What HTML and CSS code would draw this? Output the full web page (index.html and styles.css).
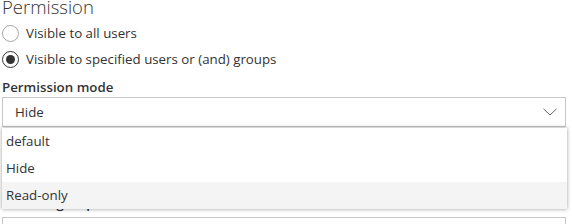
FILE: index.html
```html
<!DOCTYPE html>
<html lang="en">
<head>
    <meta charset="UTF-8" />
    <title>Permission</title>
    <link rel="stylesheet" href="styles.css">
</head>
<body>
    <div class="panel">
        <h2 class="title">Permission</h2>

        <!-- visibility -->
        <div class="radio-group">
            <label class="radio">
                <span class="circle"></span>
                Visible to all users
            </label>
            <label class="radio checked">
                <span class="circle"></span>
                Visible to specified users or (and) groups
            </label>
        </div>

        <!-- permission mode, menu is open -->
        <div class="field">
            <div class="field-label">Permission mode</div>
            <div class="dropdown-wrap">
                <div class="dropdown">
                    <span class="dropdown-value">Hide</span>
                    <svg class="chevron" width="14" height="8" viewBox="0 0 14 8">
                        <path d="M0.5 0.8 L7 7 L13.5 0.8" fill="none" stroke="#666" stroke-width="1" />
                    </svg>
                </div>
                <ul class="menu">
                    <li>default</li>
                    <li>Hide</li>
                    <li class="hover">Read-only</li>
                </ul>
            </div>
        </div>

        <div class="field field-groups">
            <div class="field-label">Allowed groups</div>
            <div class="text-input"></div>
        </div>
    </div>
</body>
</html>
```
FILE: styles.css
```css
body {
    margin: 0;
    font-family: "Open Sans", "Noto Sans", sans-serif;
    font-size: 13.3px;
    color: #333;
    background: #fff;
    overflow: hidden;
}
.panel {
    padding: 0 6px 0 2px;
}
.title {
    margin: -6px 0 0 0;
    font-size: 18.5px;
    font-weight: 300;
    line-height: 26px;
    color: #333;
}
.radio-group {
    display: flex;
    flex-direction: column;
}
.radio {
    display: flex;
    align-items: center;
    height: 26px;
    gap: 7px;
}
.circle {
    width: 17px;
    height: 17px;
    border: 1px solid #a6a6a6;
    border-radius: 50%;
    box-sizing: border-box;
    display: flex;
    align-items: center;
    justify-content: center;
}
.radio.checked .circle {
    border-color: #333;
}
.radio.checked .circle::after {
    content: "";
    width: 9px;
    height: 9px;
    border-radius: 50%;
    background: #333;
}
.field-label {
    font-weight: 600;
    line-height: 20px;
    padding-top: 5px;
}
.dropdown-wrap {
    position: relative;
}
.dropdown {
    height: 30px;
    border: 1px solid #c8c8c8;
    box-sizing: border-box;
    display: flex;
    align-items: center;
    justify-content: space-between;
    padding: 0 8px 0 12px;
}
.dropdown-value {
    line-height: 28px;
}
.menu {
    position: absolute;
    top: calc(100% + 1px);
    left: 0;
    right: -1px;
    margin: 0;
    padding: 0;
    list-style: none;
    background: #fff;
    box-shadow: 0 0 4px rgba(0, 0, 0, 0.4);
    z-index: 2;
}
.menu li {
    height: 27px;
    line-height: 27px;
    padding-left: 4px;
}
.menu li.hover {
    background: #f4f4f4;
}
.field-groups {
    margin-top: 64px;
}
.field-groups .field-label {
    padding-top: 2px;
}
.field-groups .text-input {
    margin-top: 4px;
}
.text-input {
    height: 30px;
    border: 1px solid #c8c8c8;
    box-sizing: border-box;
}
```
